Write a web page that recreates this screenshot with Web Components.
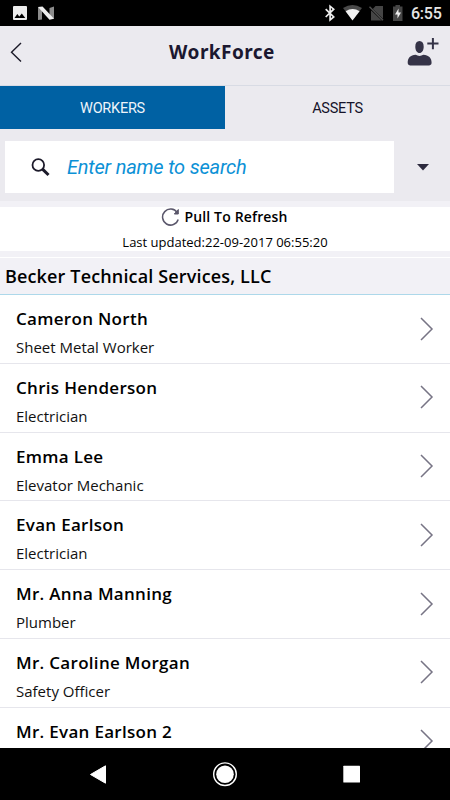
<!DOCTYPE html>
<html lang="en">
<head>
<meta charset="utf-8">
<title>WorkForce</title>
<style>
html,body{margin:0;width:450px;height:800px;overflow:hidden;background:#fff}
</style>
</head>
<body>
<workforce-app></workforce-app>
<script>
function define(name, html) {
  const template = document.createElement('template');
  template.innerHTML = html;
  customElements.define(name, class extends HTMLElement {
    constructor() {
      super();
      this.attachShadow({ mode: 'open' }).appendChild(template.content.cloneNode(true));
    }
  });
}

define('status-bar', `
<style>
:host{display:flex;flex:none;box-sizing:border-box;height:26px;background:#000;align-items:center;color:#e6e6e6;font:500 16px/26px Roboto,sans-serif}
svg{display:block;width:450px;height:26px;flex:none}
.time{margin-left:-39px;width:31px;padding-top:2px;box-sizing:border-box;white-space:nowrap;letter-spacing:-.25px}
</style>
<svg viewBox="0 0 450 26">
  <path fill="#ececec" fill-rule="evenodd" d="M14 6h12q1 0 1 1v12q0 1-1 1H14q-1 0-1-1V7q0-1 1-1zM14.500 18h10.800l-3.500-4.600-2.500 3-2-2.400z"/>
  <path fill="#8c8c8c" d="M38 7l4 2v10.500L38 20zM54 6.500V19l-4.500-3V8z"/>
  <path fill="#eee" d="M38 7l4.500-.5L54 18.800l-4.500 1z"/>
  <path fill="none" stroke="#eee" stroke-width="1.700" d="M325.700 9.200l8 7.800-3.600 3V6.200l3.600 3-8 7.800"/>
  <path fill="#494949" d="M343 8q9.500-6 19 0l-9.500 12z"/>
  <path fill="#f2f2f2" d="M345.600 11.200q7-4.500 14 0L352.500 20.600z"/>
  <path fill="#454545" d="M375.500 6H383v14.500h-12V11z"/>
  <path stroke="#000" stroke-width="2.200" d="M370 7.800l13.500 13"/>
  <path stroke="#505050" stroke-width="1.400" d="M369.500 6.800l13.500 13.500"/>
  <path fill="#454545" d="M395.500 5h4.500v1.500h2.500V21H393V6.500h2.500z"/>
  <path fill="#eee" d="M398.500 8.500l-3.500 6h2.500v4l3.500-6h-2.500z"/>
</svg>
<div class="time">6:55</div>`);

define('app-header', `
<style>
:host{display:grid;grid-template-columns:80px 1fr 80px;flex:none;height:60px;box-sizing:border-box;background:#ebeaef;border-bottom:1px solid #d8dbe4;color:#1b1830}
h1{margin:0;padding-right:6px;text-align:center;font:700 19px/53px "Noto Sans","Open Sans",sans-serif;letter-spacing:.45px}
svg{display:block}
</style>
<svg width="80" height="59" viewBox="0 26 80 59"><path d="M21 43L11.500 52.200 21 61.500" fill="none" stroke="#1b1a28" stroke-width="1.400"/></svg>
<h1><slot></slot></h1>
<svg width="80" height="59" viewBox="370 26 80 59"><g fill="#353347"><path d="M419.500 41c2.800 0 4.200 2.100 4.200 5.800 0 3.800-1.800 6.300-4.200 6.300s-4.200-2.500-4.200-6.300c0-3.700 1.400-5.800 4.200-5.800zM407.700 63c0-5.500 2.600-7.400 8-8.200 2.200 1.500 5.400 1.500 7.600 0 5.400.8 8.300 2.700 8.300 8.200 0 2-1.900 2.500-4 2.500h-16c-2 0-3.900-.5-3.900-2.500z"/><path d="M431.900 38h2v4.600h4.600v2h-4.600v4.600h-2v-4.600h-4.600v-2h4.600z"/></g></svg>`);

define('view-tabs', `
<style>
:host{display:grid;grid-template-columns:1fr 1fr;flex:none;height:43px;background:#ebeaef;color:#15132a;font:400 14.500px/44px Roboto,sans-serif;letter-spacing:-.25px;text-align:center}
div{padding-top:1px;box-sizing:border-box;height:43px;overflow:hidden}
.on{background:#0061a3;color:#eef4fa}
</style>
<div class="on"><slot name="active"></slot></div><div><slot></slot></div>`);

define('search-bar', `
<style>
:host{display:grid;grid-template-columns:389px 1fr;flex:none;box-sizing:border-box;height:72px;padding:12px 0 8px 5px;background:#ebeaef}
.field{display:flex;align-items:center;background:#fff;color:#0c91d6;font:italic 400 20px/52px Roboto,sans-serif;letter-spacing:-.2px}
.field svg{margin:0 17px 0 25px;flex:none}
.menu{display:grid;place-items:center;padding-left:1px}
svg{display:block}
</style>
<div class="field"><svg width="20" height="20" viewBox="0 0 20 20" fill="none" stroke="#1c1a2a"><circle cx="8.300" cy="8" r="5.800" stroke-width="1.800"/><path d="M12.500 12.200l6 5.800" stroke-width="3"/></svg><span><slot></slot></span></div>
<div class="menu"><svg width="14" height="8" viewBox="0 0 14 8"><path d="M1 1h12L7 7.500z" fill="#2c2a3e"/></svg></div>`);

define('pull-refresh', `
<style>
:host{display:block;flex:none;box-sizing:border-box;height:56px;padding:6px 0;background:#f2f1f6;color:#000;font-family:"Open Sans","Noto Sans",sans-serif}
.box{height:44px;background:#fff;box-sizing:border-box;text-align:center}
.title{display:flex;justify-content:center;align-items:center;height:20px;gap:4px;font-weight:600;font-size:14px;letter-spacing:.15px;line-height:20px;padding-right:1px}
.sub{font-size:13px;line-height:30px;white-space:nowrap}
svg{display:block;margin-top:-2px}
</style>
<div class="box"><div class="title"><svg width="19" height="19" viewBox="0 0 19 19" fill="none" stroke="#5a576b" stroke-width="1.500"><path d="M16.200 5.600A8 8 0 1 0 17.200 12.500"/><path d="M17.300 2.500v4.500h-4z" fill="#5a576b" stroke-width="1"/></svg><span><slot></slot></span></div>
<div class="sub"><slot name="time"></slot></div></div>`);

define('company-heading', `
<style>
:host{display:block;flex:none;box-sizing:border-box;height:38px;border-top:1px solid #fff;border-bottom:1px solid #add8ea;background:#f2f1f6;color:#000;padding-left:5px;font:600 18px/37px "Open Sans","Noto Sans",sans-serif;letter-spacing:.15px}
</style><slot></slot>`);

define('worker-row', `
<style>
:host{display:flex;justify-content:space-between;flex:none;box-sizing:border-box;height:68.750px;padding:11px 16px 0;border-bottom:1px solid #e6e6ec;background:#fff;color:#000;font:400 15px "Open Sans","Noto Sans",sans-serif}
.name{font-weight:600;font-size:17px;letter-spacing:.3px;line-height:26px}
.role{font-size:15px;line-height:31px;color:#111}
svg{display:block;margin-top:9.500px;flex:none}
</style>
<div><div class="name"><slot></slot></div><div class="role"><slot name="role"></slot></div></div>
<svg width="15" height="26" viewBox="0 0 15 26"><path d="M2 2L13 13 2 24" fill="none" stroke="#777485" stroke-width="1.500"/></svg>`);

define('nav-bar', `
<style>
:host{display:block;flex:none;height:52.500px;background:#000}
svg{display:block}
</style>
<svg width="450" height="52.500" viewBox="0 747.500 450 52.500"><path d="M90.500 774l15-8.700v17.400z" fill="#fff" stroke="#fff" stroke-linejoin="round"/><circle cx="225" cy="773.700" r="11.300" fill="none" stroke="#fff" stroke-width="1.400"/><circle cx="225" cy="773.700" r="8.800" fill="#fff"/><rect x="343.300" y="765.300" width="16.700" height="16.700" rx=".5" fill="#fff"/></svg>`);

define('workforce-app', `
<style>
:host{display:flex;flex-direction:column;width:450px;height:800px;overflow:hidden}
.list{flex:1;min-height:0;overflow:hidden;display:flex;flex-direction:column;background:#fff}
</style>
<status-bar></status-bar>
<app-header>WorkForce</app-header>
<view-tabs><span slot="active">WORKERS</span>ASSETS</view-tabs>
<search-bar>Enter name to search</search-bar>
<pull-refresh>Pull To Refresh<span slot="time">Last updated:22-09-2017 06:55:20</span></pull-refresh>
<company-heading>Becker Technical Services, LLC</company-heading>
<div class="list">
<worker-row>Cameron North<span slot="role">Sheet Metal Worker</span></worker-row>
<worker-row>Chris Henderson<span slot="role">Electrician</span></worker-row>
<worker-row>Emma Lee<span slot="role">Elevator Mechanic</span></worker-row>
<worker-row>Evan Earlson<span slot="role">Electrician</span></worker-row>
<worker-row>Mr. Anna Manning<span slot="role">Plumber</span></worker-row>
<worker-row>Mr. Caroline Morgan<span slot="role">Safety Officer</span></worker-row>
<worker-row>Mr. Evan Earlson 2</worker-row>
</div>
<nav-bar></nav-bar>`);
</script>
</body>
</html>
